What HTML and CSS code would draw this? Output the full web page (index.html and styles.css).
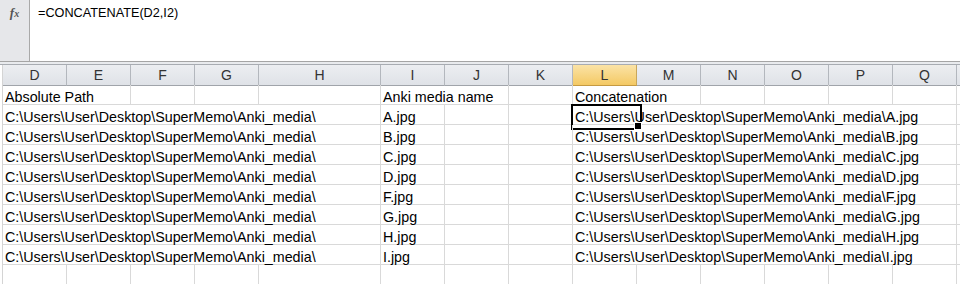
FILE: index.html
```html
<!DOCTYPE html>
<html lang="en">
<head>
    <meta charset="UTF-8">
    <title>Concatenate - Sheet</title>
    <link rel="stylesheet" href="styles.css">
</head>
<body>

    <!-- Formula bar -->
    <div class="formula-bar">
        <div class="fx-box"><span class="fx">f<small>x</small></span></div>
        <div class="formula">=CONCATENATE(D2,I2)</div>
    </div>
    <div class="bar-gap"></div>

    <!-- Grid -->
    <div class="sheet">
        <div class="col-head">D</div>
        <div class="col-head">E</div>
        <div class="col-head">F</div>
        <div class="col-head">G</div>
        <div class="col-head">H</div>
        <div class="col-head">I</div>
        <div class="col-head">J</div>
        <div class="col-head">K</div>
        <div class="col-head active">L</div>
        <div class="col-head">M</div>
        <div class="col-head">N</div>
        <div class="col-head">O</div>
        <div class="col-head">P</div>
        <div class="col-head">Q</div>
        <div class="col-head last"></div>

        <div class="cell span-2">Absolute Path</div>
        <div class="cell"></div>
        <div class="cell"></div>
        <div class="cell"></div>
        <div class="cell span-2">Anki media name</div>
        <div class="cell"></div>
        <div class="cell span-2">Concatenation</div>
        <div class="cell"></div>
        <div class="cell"></div>
        <div class="cell"></div>
        <div class="cell"></div>
        <div class="cell"></div>
    </div>

    <script>
        const sheet = document.querySelector('.sheet');
        const path = 'C:\\Users\\User\\Desktop\\SuperMemo\\Anki_media\\';
        const files = ['A', 'B', 'C', 'D', 'F', 'G', 'H', 'I'];

        function addCell(text, cls) {
            const cell = document.createElement('div');
            cell.className = 'cell' + (cls ? ' ' + cls : '');
            cell.textContent = text;
            sheet.appendChild(cell);
        }

        files.forEach((name, index) => {
            addCell(path, 'span-5');
            addCell(name + '.jpg');
            addCell('');
            addCell('');
            addCell(path + name + '.jpg', 'span-6' + (index === 0 ? ' selected' : ''));
            addCell('');
        });

        // empty last row
        for (let i = 0; i < 15; i++) {
            addCell('');
        }
    </script>

</body>
</html>
```

FILE: styles.css
```css
* {
    margin: 0;
    padding: 0;
    box-sizing: border-box;
}

body {
    width: 960px;
    height: 284px;
    overflow: hidden;
    background: #fff;
    font-family: 'Liberation Sans', Arial, sans-serif;
    color: #000;
}

/* Formula bar */
.formula-bar {
    display: flex;
    height: 62px;
    border-bottom: 1px solid #a5a5a5;
    background: #fff;
}

.fx-box {
    width: 30px;
    background: #e6e7ea;
    border-right: 1px solid #a9a9a9;
    padding-top: 3px;
    text-align: center;
}

.fx {
    font-family: 'Liberation Serif', 'Times New Roman', serif;
    font-style: italic;
    font-weight: bold;
    font-size: 13px;
    color: #555;
}

.fx small {
    font-size: 10px;
}

.formula {
    flex: 1;
    padding: 4px 0 0 8px;
    font-size: 12.7px;
    line-height: 18px;
}

.bar-gap {
    height: 3px;
    background: #e9ebee;
    border-bottom: 1px solid #a8acb2;
}

/* Sheet */
.sheet {
    display: grid;
    grid-template-columns: repeat(4, 64px) 122px repeat(9, 64px) 1fr;
    grid-auto-rows: 20px;
    margin-left: 2px;
    border-left: 1px solid #d4d4d4;
}

.col-head {
    height: 21px;
    background: linear-gradient(to bottom, #eceef1, #dfe2e7);
    border-right: 1px solid #b3b7bd;
    border-bottom: 1px solid #a0a4aa;
    font-size: 14px;
    line-height: 21px;
    text-align: center;
    color: #333;
}

.col-head.active {
    background: linear-gradient(to bottom, #fbe3a6, #f4c964);
    border-right-color: #c9a75a;
    border-bottom-color: #c59a42;
}

.col-head.last {
    border-right: none;
}

.cell {
    border-right: 1px solid #d9d9d9;
    border-bottom: 1px solid #d9d9d9;
    padding: 3px 2px 0;
    font-size: 14.3px;
    line-height: 18px;
    white-space: nowrap;
    overflow: visible;
    position: relative;
}

.span-2 {
    grid-column: span 2;
}

.span-5 {
    grid-column: span 5;
}

.span-6 {
    grid-column: span 6;
}

/* Active cell L2 */
.cell.selected::before {
    content: '';
    position: absolute;
    left: -2px;
    top: -1px;
    width: 67px;
    height: 22px;
    border: 2px solid #000;
}

.cell.selected::after {
    content: '';
    position: absolute;
    left: 61px;
    top: 17px;
    width: 6px;
    height: 6px;
    background: #000;
    border: 1px solid #fff;
}
```
